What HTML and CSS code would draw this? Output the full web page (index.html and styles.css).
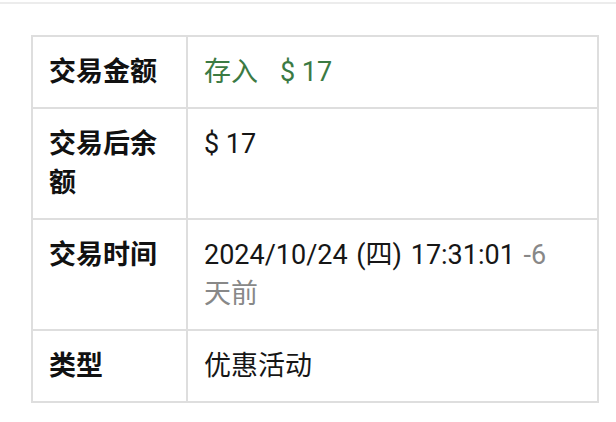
FILE: index.html
```html
<!DOCTYPE html>
<html lang="zh-CN">
<head>
<meta charset="utf-8">
<title>交易详情</title>
<link rel="stylesheet" href="styles.css">
</head>
<body>
<div class="topbar"></div>
<main class="content">
  <table class="detail">
    <tr>
      <th>交易金额</th>
      <td class="amount"><span class="kind">存入</span>$ 17</td>
    </tr>
    <tr>
      <th>交易后余额</th>
      <td>$ 17</td>
    </tr>
    <tr>
      <th>交易时间</th>
      <td class="time">2024/10/24 (四) 17:31:01 <span class="ago">-6 <span class="nowrap">天前</span></span></td>
    </tr>
    <tr>
      <th>类型</th>
      <td>优惠活动</td>
    </tr>
  </table>
</main>
</body>
</html>
```

FILE: styles.css
```css
html, body {
  margin: 0;
  padding: 0;
  background: #ffffff;
}
body {
  font-family: "Roboto", "Noto Sans CJK SC", sans-serif;
  color: #161616;
}
.topbar {
  height: 2px;
  margin-top: 2px;
  background: #ececec;
}
.content {
  padding: 31px 17px 0 31px;
}
.detail {
  width: 568px;
  border-collapse: collapse;
  border: 2px solid #dedede;
  font-size: 27px;
  line-height: 39px;
}
.detail th,
.detail td {
  border: 2px solid #dedede;
  padding: 15.5px 16px;
  vertical-align: top;
  text-align: left;
}
.detail th {
  width: 121px;
  font-weight: 700;
  color: #111111;
}
.detail td {
  font-weight: 400;
  color: #161616;
}
.detail td.amount {
  color: #3b7a43;
}
.detail td.time {
  word-spacing: 2px;
}
.kind {
  margin-right: 22px;
}
.ago {
  color: #888888;
}
.nowrap {
  white-space: nowrap;
}
```
